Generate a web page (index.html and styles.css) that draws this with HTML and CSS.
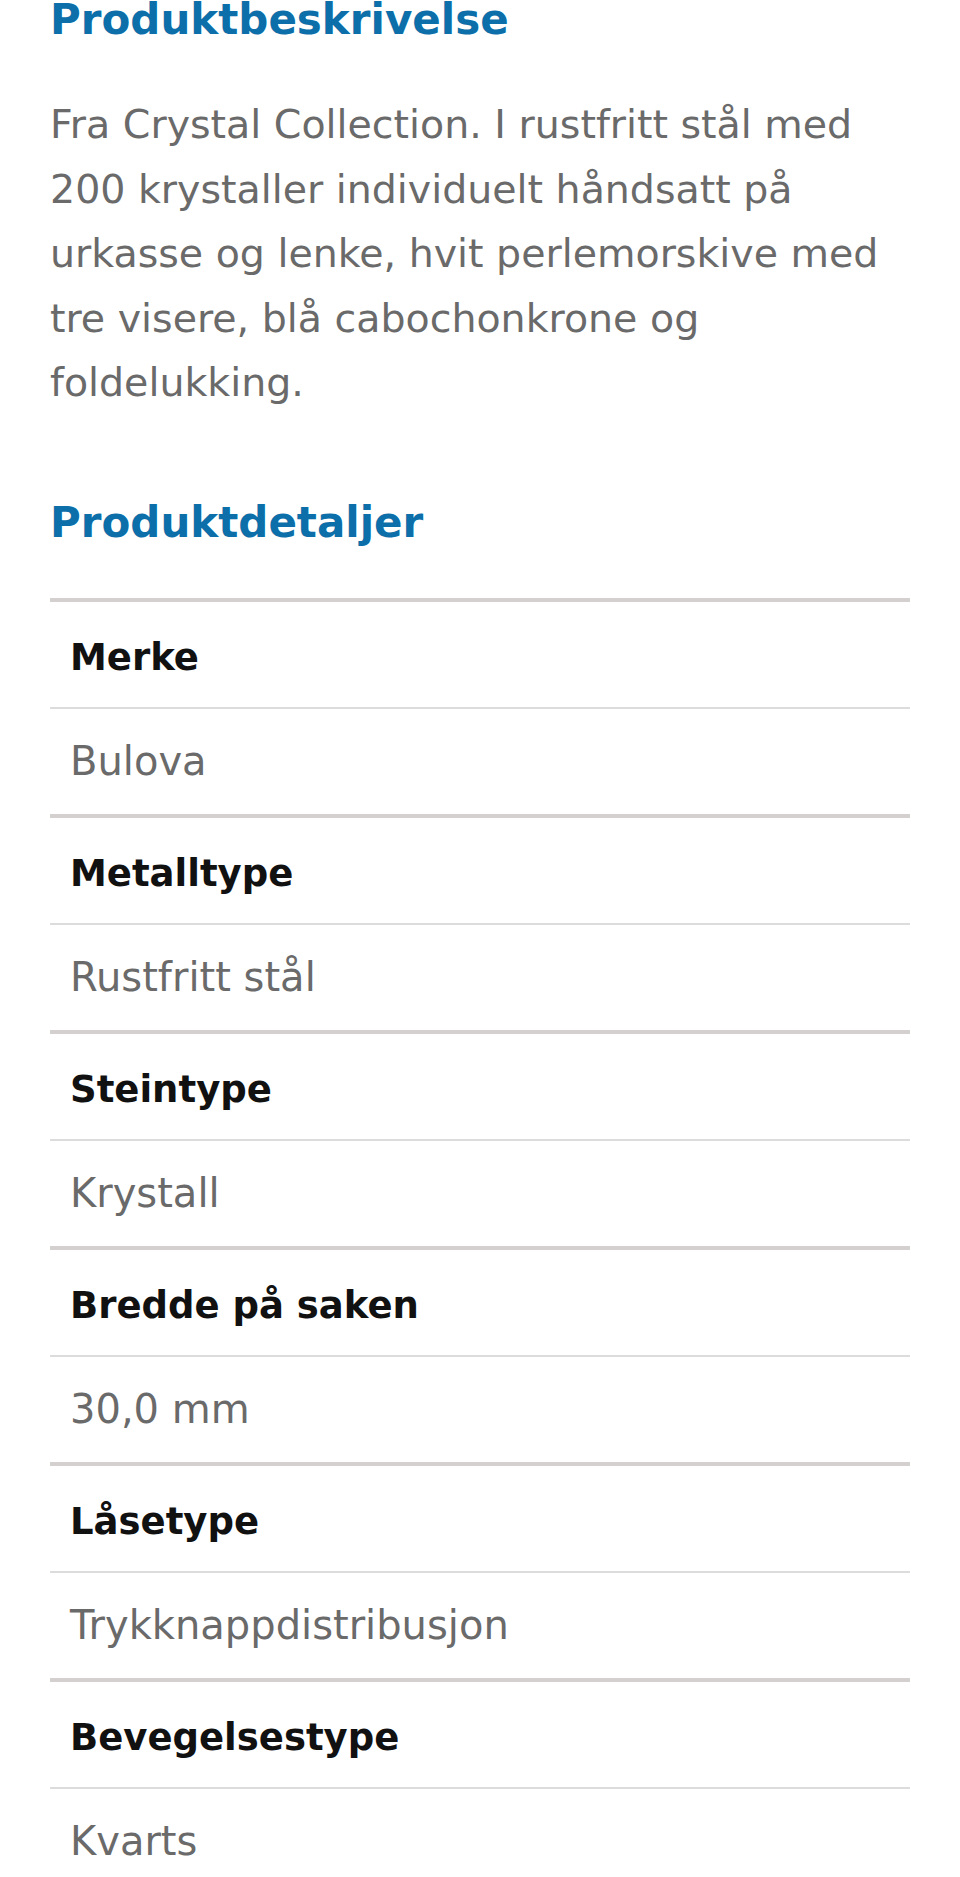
FILE: index.html
```html
<!DOCTYPE html>
<html lang="no">
<head>
    <meta charset="UTF-8">
    <meta name="viewport" content="width=device-width, initial-scale=1.0">
    <title>Produktbeskrivelse</title>
    <link rel="stylesheet" href="styles.css">
</head>
<body>
    <div class="container">
        <h2 class="section-title">Produktbeskrivelse</h2>
        <p class="description">Fra Crystal Collection. I rustfritt stål med 200 krystaller individuelt håndsatt på urkasse og lenke, hvit perlemorskive med tre visere, blå cabochonkrone og foldelukking.</p>

        <h2 class="section-title details-title">Produktdetaljer</h2>
        <dl class="details">
            <dt>Merke</dt>
            <dd>Bulova</dd>
            <dt>Metalltype</dt>
            <dd>Rustfritt stål</dd>
            <dt>Steintype</dt>
            <dd>Krystall</dd>
            <dt>Bredde på saken</dt>
            <dd>30,0 mm</dd>
            <dt>Låsetype</dt>
            <dd>Trykknappdistribusjon</dd>
            <dt>Bevegelsestype</dt>
            <dd>Kvarts</dd>
        </dl>
    </div>
</body>
</html>
```

FILE: styles.css
```css
body {
    font-family: "DejaVu Sans", "Liberation Sans", sans-serif;
    margin: 0;
    padding: 0;
    background-color: #ffffff;
}
.container {
    width: 860px;
    margin: 0 0 0 50px;
}
.section-title {
    margin: 0 0 52px;
    font-size: 42px;
    line-height: 40px;
    font-weight: bold;
    color: #0c6fa9;
}
.description {
    margin: 0;
    font-size: 39.5px;
    line-height: 64.5px;
    color: #6a6a6a;
}
.details-title {
    margin: 88px 0 55.5px;
}
.details {
    margin: 0;
}
.details dt {
    border-top: 4px solid #d4d0d0;
    padding: 7px 20px 0;
    line-height: 98px;
    font-size: 37px;
    font-weight: bold;
    color: #111111;
}
.details dd {
    margin: 0;
    border-top: 2px solid #dcdcdc;
    padding: 0 20px;
    line-height: 105px;
    font-size: 40px;
    color: #6a6a6a;
}
```
